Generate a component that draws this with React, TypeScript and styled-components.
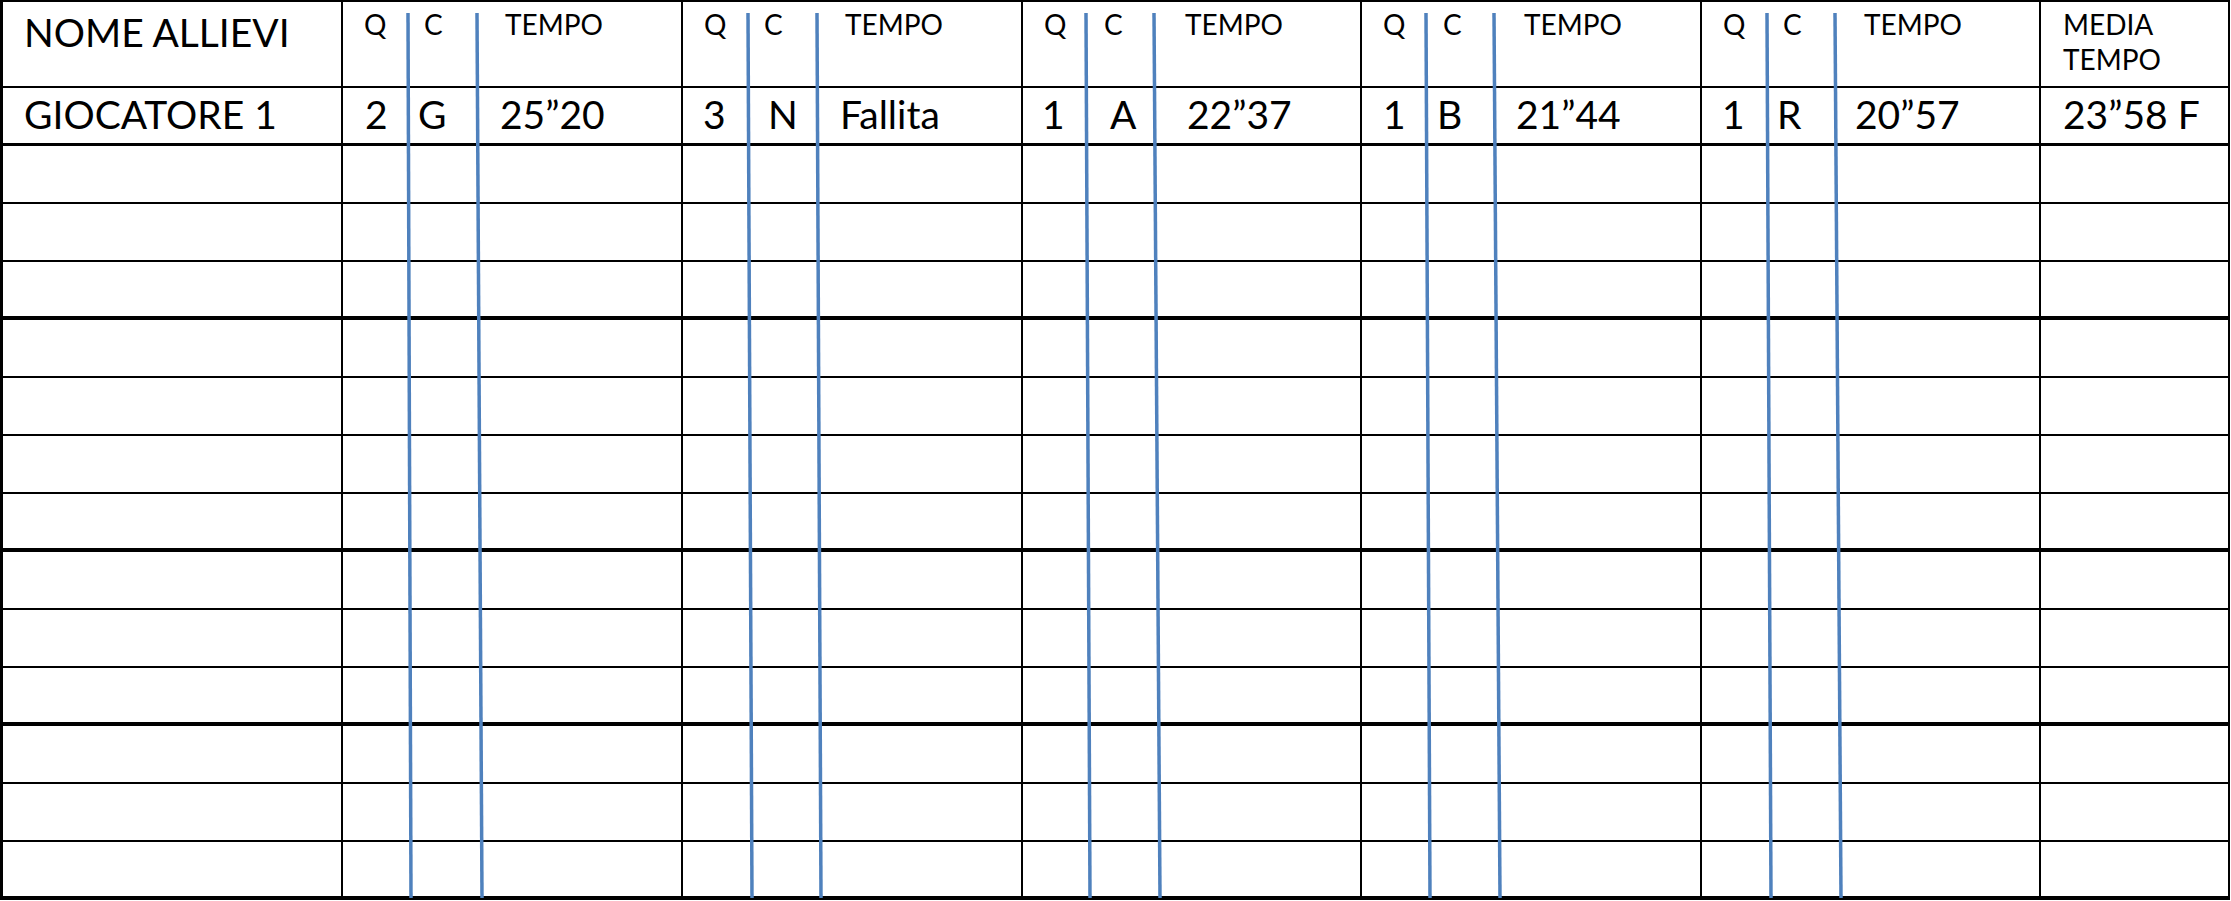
import React from "react";
import styled, { createGlobalStyle } from "styled-components";

const Global = createGlobalStyle`
  html, body { margin: 0; padding: 0; background: #ffffff; }
  body { font-family: Lato, "Open Sans", sans-serif; color: #000; }
`;

const COLS = "340px 340px 340px 339px 340px 339px 189px";

const Table = styled.div`
  position: relative;
  width: 2230px;
  box-sizing: border-box;
  border-left: 3px solid #000;
  border-top: 2px solid #000;
  display: flex;
  flex-direction: column;
`;

const Row = styled.div<{ $h: number; $line: number }>`
  display: grid;
  grid-template-columns: ${COLS};
  height: ${(p) => p.$h}px;
  box-sizing: border-box;
  border-bottom: ${(p) => p.$line}px solid #000;
`;

const Cell = styled.div`
  box-sizing: border-box;
  border-right: 2px solid #000;
  min-width: 0;
  overflow: hidden;
  white-space: nowrap;
`;

const BigCell = styled(Cell)<{ $pad: number; $top: number }>`
  font-size: 39px;
  line-height: 39px;
  padding-left: ${(p) => p.$pad}px;
  padding-top: ${(p) => p.$top}px;
`;

const SmallCell = styled(Cell)`
  font-size: 28px;
  line-height: 35px;
  padding-left: 22px;
  padding-top: 5px;
`;

const Block = styled(Cell)`
  display: grid;
  grid-template-columns: 66px 69px 1fr;
`;

const Sub = styled.span<{ $pad: number; $big?: boolean }>`
  display: block;
  padding-left: ${(p) => p.$pad}px;
  font-size: ${(p) => (p.$big ? 39 : 28)}px;
  line-height: ${(p) => (p.$big ? 39 : 35)}px;
  padding-top: ${(p) => (p.$big ? 7 : 5)}px;
`;

const Overlay = styled.svg`
  position: absolute;
  left: -3px;
  top: -2px;
  width: 2230px;
  height: 900px;
  pointer-events: none;
`;

type Result = { q: string; c: string; t: string; qi: number; ci: number; ti: number };

const results: Result[] = [
  { q: "2", c: "G", t: "25”20", qi: 22, ci: 9, ti: 22 },
  { q: "3", c: "N", t: "Fallita", qi: 20, ci: 19, ti: 22 },
  { q: "1", c: "A", t: "22”37", qi: 19, ci: 21, ti: 29 },
  { q: "1", c: "B", t: "21”44", qi: 21, ci: 9, ti: 19 },
  { q: "1", c: "R", t: "20”57", qi: 20, ci: 9, ti: 18 },
];

const blueLines: [number, number][] = [
  [408, 411], [477, 482],
  [748, 752], [817, 821],
  [1086, 1090], [1154, 1160],
  [1426, 1430], [1494, 1500],
  [1767, 1771], [1835, 1841],
];

const thickAfter = new Set([3, 7, 10, 13]);

export default function App() {
  return (
    <>
      <Global />
      <Table>
        <Row $h={86} $line={2}>
          <BigCell $pad={21} $top={11}>NOME ALLIEVI</BigCell>
          {results.map((_, i) => (
            <Block key={i}>
              <Sub $pad={21}>Q</Sub>
              <Sub $pad={15}>C</Sub>
              <Sub $pad={27}>TEMPO</Sub>
            </Block>
          ))}
          <SmallCell>
            MEDIA
            <br />
            TEMPO
          </SmallCell>
        </Row>
        <Row $h={58} $line={3}>
          <BigCell $pad={21} $top={7}>GIOCATORE 1</BigCell>
          {results.map((r, i) => (
            <Block key={i}>
              <Sub $big $pad={r.qi}>{r.q}</Sub>
              <Sub $big $pad={r.ci}>{r.c}</Sub>
              <Sub $big $pad={r.ti}>{r.t}</Sub>
            </Block>
          ))}
          <BigCell $pad={22} $top={7}>23”58 F</BigCell>
        </Row>
        {Array.from({ length: 13 }, (_, k) => k + 1).map((idx) => (
          <Row key={idx} $h={58} $line={thickAfter.has(idx) ? 4 : 2}>
            <Cell />
            {results.map((_, i) => (
              <Block key={i} />
            ))}
            <Cell />
          </Row>
        ))}
        <Overlay viewBox="0 0 2230 900">
          {blueLines.map(([x1, x2], i) => (
            <line key={i} x1={x1} y1={13} x2={x2} y2={898} stroke="#4f81bd" strokeWidth={3.5} />
          ))}
        </Overlay>
      </Table>
    </>
  );
}
